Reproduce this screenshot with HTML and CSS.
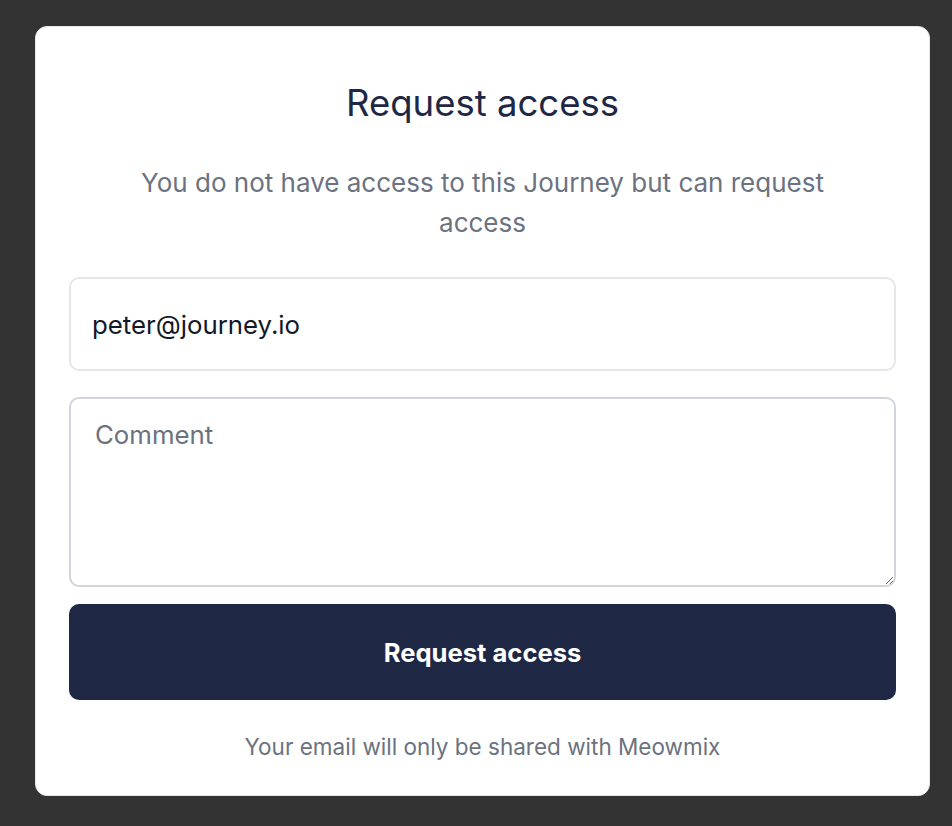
FILE: index.html
```html
<!DOCTYPE html>
<html>
<head>
<meta charset="utf-8">
<link rel="stylesheet" href="styles.css">
</head>
<body>
<div class="modal">
  <h1 class="title">Request access</h1>
  <p class="subtitle">You do not have access to this Journey but can request access</p>
  <form class="form">
    <input class="field email" type="email" value="peter@journey.io">
    <textarea class="field comment" placeholder="Comment"></textarea>
    <button class="submit" type="button">Request access</button>
  </form>
  <p class="note">Your email will only be shared with Meowmix</p>
</div>
</body>
</html>
```
FILE: styles.css
```css
html, body {
  margin: 0;
  padding: 0;
  background: #333333;
  height: 100%;
}
body {
  padding: 26px 0 0 35px;
  box-sizing: border-box;
  font-family: "Inter", "Liberation Sans", sans-serif;
}
.modal {
  width: 895px;
  height: 770px;
  box-sizing: border-box;
  background: #ffffff;
  border: 1px solid #e5e7eb;
  border-radius: 12px;
  padding: 54px 33px 0 33px;
  display: flex;
  flex-direction: column;
  align-items: stretch;
}
.title {
  margin: 0;
  text-align: center;
  font-size: 36.5px;
  line-height: 44px;
  font-weight: 400;
  color: #1e2744;
}
.subtitle {
  margin: 38px auto 0;
  max-width: 710px;
  text-align: center;
  font-size: 26px;
  line-height: 40px;
  color: #6b7280;
}
.form {
  margin-top: 34px;
  display: flex;
  flex-direction: column;
}
.field {
  box-sizing: border-box;
  width: 100%;
  font-family: inherit;
  font-size: 25.8px;
  border-radius: 10px;
  outline: none;
  background: #ffffff;
}
.email {
  height: 94px;
  border: 2px solid #e5e7eb;
  padding: 0 21px;
  color: #111827;
}
.comment {
  margin-top: 26px;
  height: 190px;
  border: 2px solid #d1d5db;
  padding: 20px 24px;
  color: #111827;
  resize: vertical;
}
.comment::placeholder {
  color: #6b7280;
}
.submit {
  margin-top: 17px;
  height: 96px;
  border: none;
  border-radius: 10px;
  background: #1e2744;
  color: #ffffff;
  font-family: inherit;
  font-size: 25.6px;
  font-weight: 700;
}
.note {
  margin: 33px 0 0;
  text-align: center;
  font-size: 22.5px;
  line-height: 28px;
  color: #6b7280;
}
```
